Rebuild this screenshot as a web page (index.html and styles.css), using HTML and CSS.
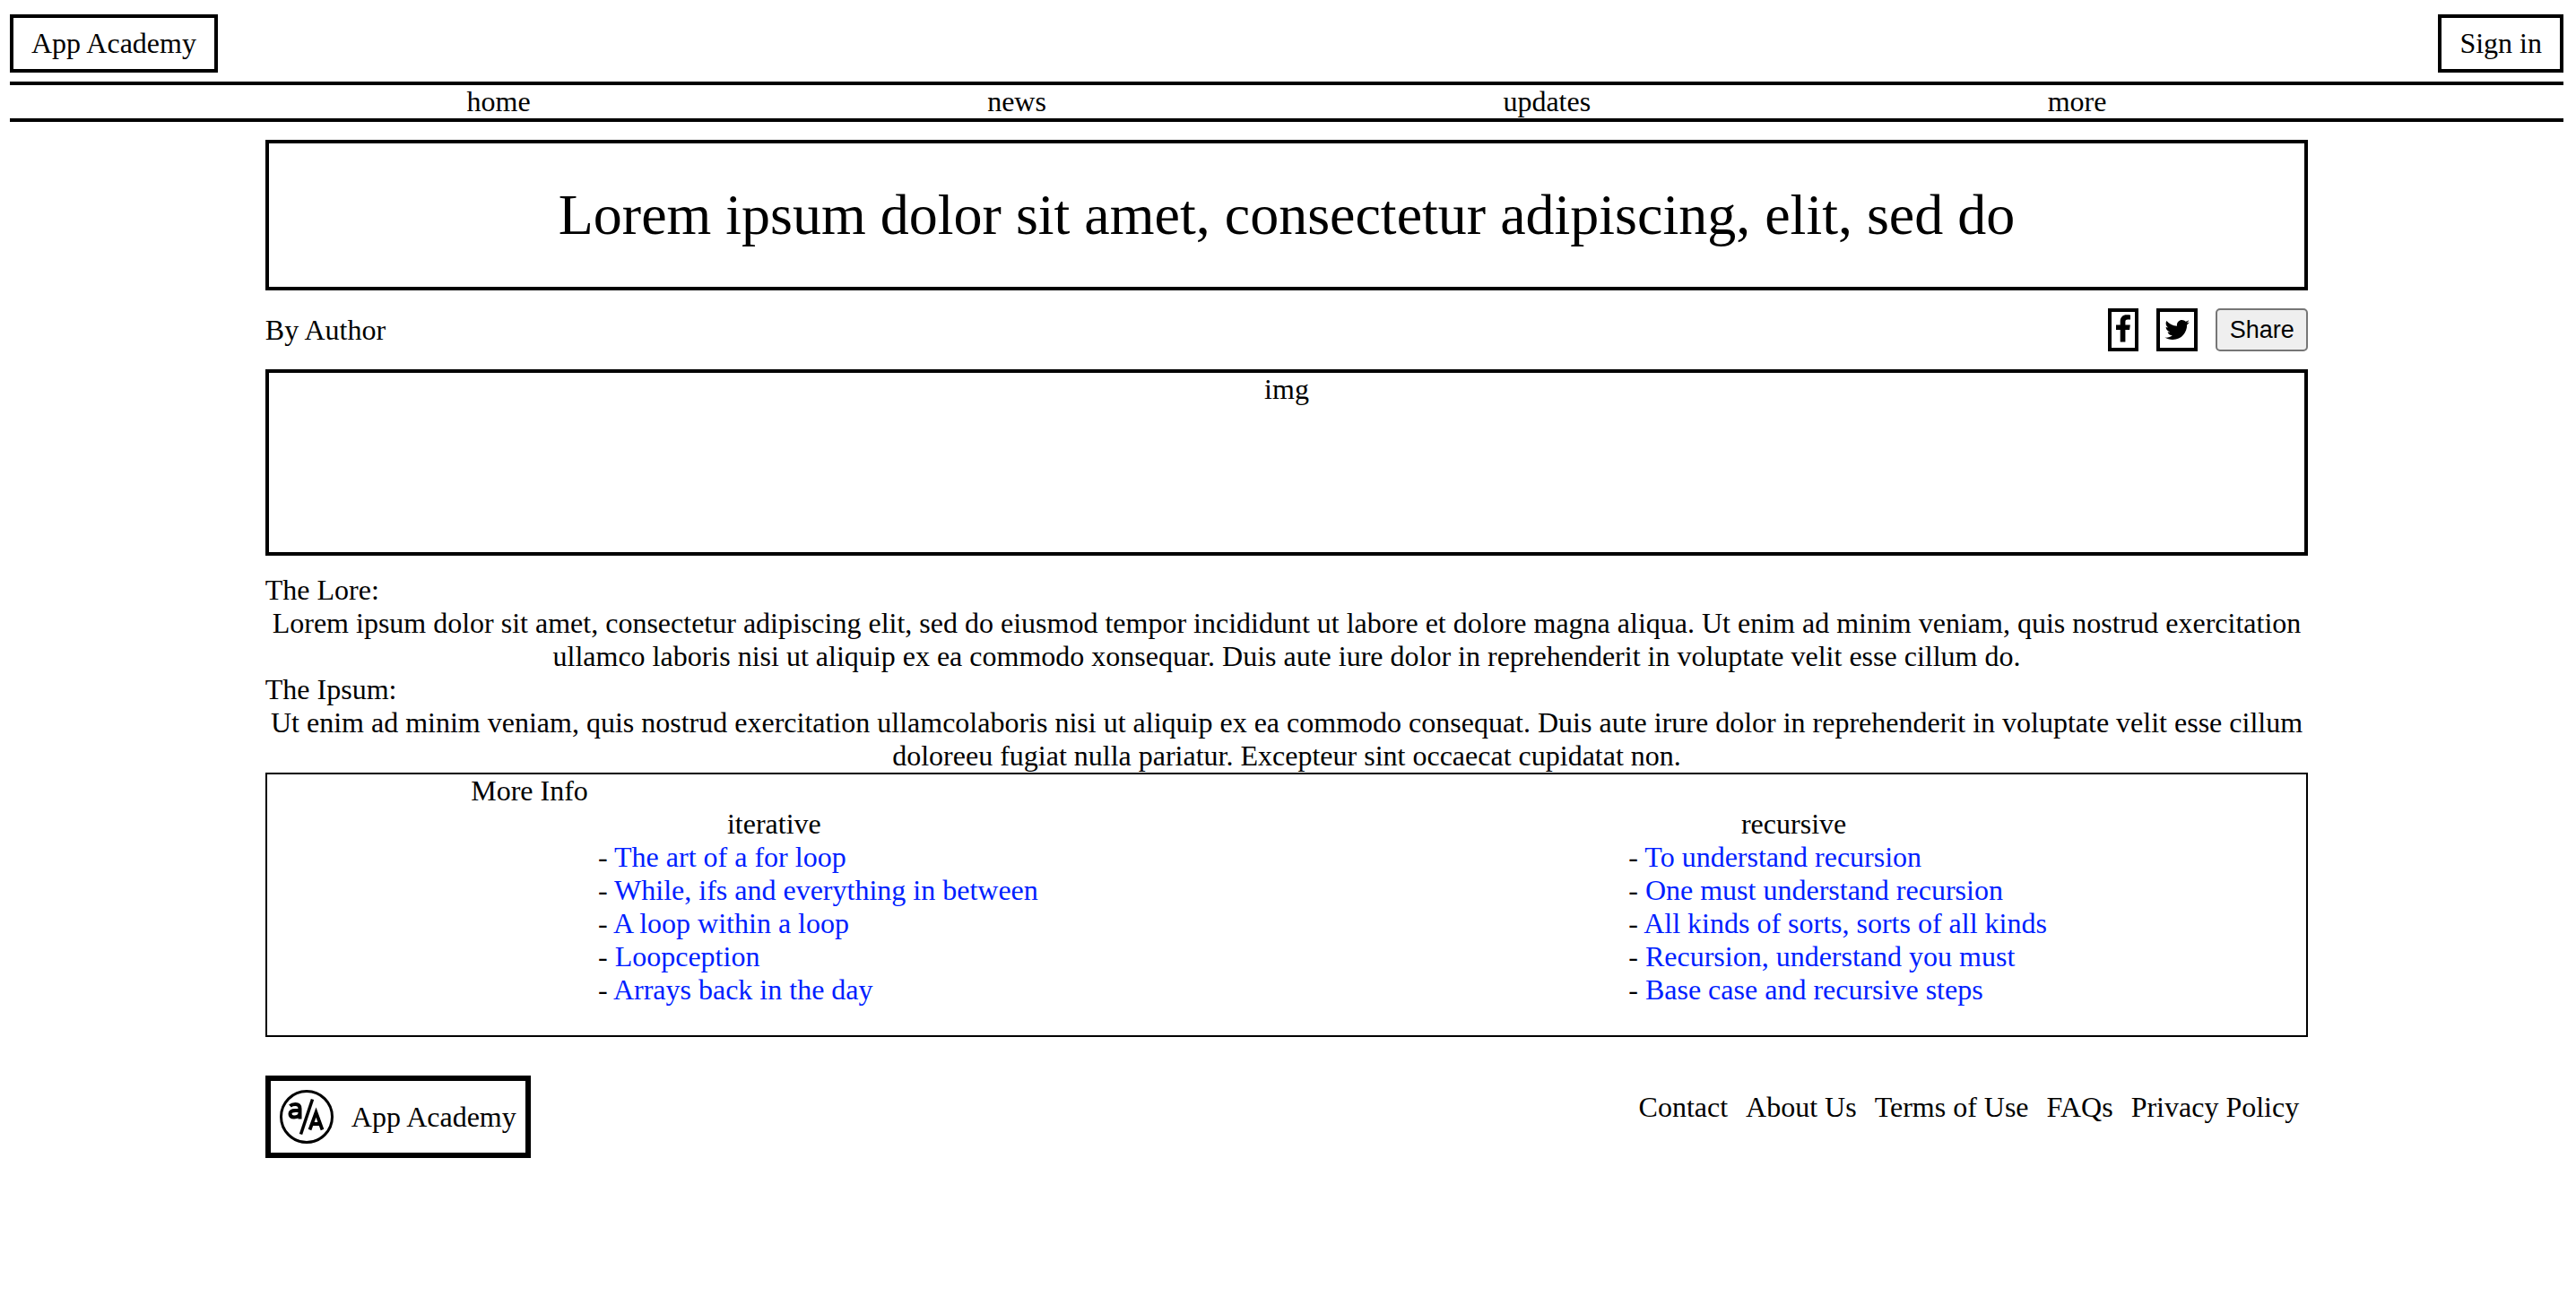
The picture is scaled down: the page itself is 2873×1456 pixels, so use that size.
FILE: index.html
```html
<!DOCTYPE html>
<html lang="en">
<head>
<meta charset="utf-8">
<meta name="viewport" content="width=device-width, initial-scale=1">
<title>App Academy</title>
<link rel="stylesheet" href="styles.css">
</head>
<body>
<header class="top-bar">
  <a class="box-link" href="#">App Academy</a>
  <a class="box-link" href="#">Sign in</a>
</header>
<nav class="main-nav">
  <a href="#">home</a>
  <a href="#">news</a>
  <a href="#">updates</a>
  <a href="#">more</a>
</nav>
<main class="content">
  <h1 class="title">Lorem ipsum dolor sit amet, consectetur adipiscing, elit, sed do</h1>
  <div class="byline">
    <span>By Author</span>
    <div class="social">
      <a class="social-link" href="#" aria-label="Facebook">
        <svg class="icon-facebook" viewBox="0 0 18 32"><path d="M17 1.500v5h-2.900c-2.300 0-2.700 1.100-2.700 2.700v3.300h5.400l-.7 5.500h-4.700v13.500H5.700V18H1v-5.500h4.700v-4C5.700 3.900 8.600 1.300 12.800 1.300c2 0 3.700.1 4.200.2z"/></svg>
      </a>
      <a class="social-link" href="#" aria-label="Twitter">
        <svg class="icon-twitter" viewBox="0 -2 30 32"><path d="M28.900 7.500c-.8 1.100-1.700 2.100-2.800 2.900v.7c0 7.400-5.700 16-16 16-3.200 0-6.200-.9-8.700-2.500.5.100.9.100 1.400.1 2.700 0 5.100-.9 7-2.400-2.500 0-4.600-1.700-5.300-3.900.4.100.7.100 1.100.1.500 0 1-.1 1.500-.2-2.600-.5-4.500-2.800-4.500-5.500v-.1c.7.400 1.600.7 2.500.7-1.500-1-2.500-2.700-2.500-4.700 0-1 .3-2 .8-2.800 2.800 3.400 6.900 5.600 11.600 5.900-.1-.4-.1-.9-.1-1.300 0-3.100 2.500-5.600 5.600-5.600 1.600 0 3.100.7 4.100 1.800 1.300-.2 2.500-.7 3.600-1.400-.4 1.300-1.300 2.400-2.500 3.100 1.100-.1 2.200-.4 3.200-.9z"/></svg>
      </a>
      <button class="share" type="button">Share</button>
    </div>
  </div>
  <div class="picture">img</div>
  <section>
    <h2 class="plain-heading">The Lore:</h2>
    <p class="paragraph">Lorem ipsum dolor sit amet, consectetur adipiscing elit, sed do eiusmod tempor incididunt ut labore et dolore magna aliqua. Ut enim ad minim veniam, quis nostrud exercitation ullamco laboris nisi ut aliquip ex ea commodo xonsequar. Duis aute iure dolor in reprehenderit in voluptate velit esse cillum do.</p>
    <h2 class="plain-heading">The Ipsum:</h2>
    <p class="paragraph">Ut enim ad minim veniam, quis nostrud exercitation ullamcolaboris nisi ut aliquip ex ea commodo consequat. Duis aute irure dolor in reprehenderit in voluptate velit esse cillum doloreeu fugiat nulla pariatur. Excepteur sint occaecat cupidatat non.</p>
  </section>
  <section class="more-info">
    <h2 class="plain-heading more-heading">More Info</h2>
    <div class="topics">
      <div class="topic">
        <h3 class="plain-heading topic-heading">iterative</h3>
        <ul class="topic-list">
          <li>- <a href="#">The art of a for loop</a></li>
          <li>- <a href="#">While, ifs and everything in between</a></li>
          <li>- <a href="#">A loop within a loop</a></li>
          <li>- <a href="#">Loopception</a></li>
          <li>- <a href="#">Arrays back in the day</a></li>
        </ul>
      </div>
      <div class="topic">
        <h3 class="plain-heading topic-heading">recursive</h3>
        <ul class="topic-list">
          <li>- <a href="#">To understand recursion</a></li>
          <li>- <a href="#">One must understand recursion</a></li>
          <li>- <a href="#">All kinds of sorts, sorts of all kinds</a></li>
          <li>- <a href="#">Recursion, understand you must</a></li>
          <li>- <a href="#">Base case and recursive steps</a></li>
        </ul>
      </div>
    </div>
  </section>
</main>
<footer class="footer">
  <a class="brand" href="#">
    <svg class="brand-logo" viewBox="0 0 60 60" aria-hidden="true">
      <circle cx="30" cy="30" r="28.500" stroke-width="3"/>
      <path d="M36.500 10.500 23.500 49.500" stroke-width="3.500"/>
      <path d="M11.500 18c1.500-1.500 3.500-2 6-2 3.500 0 5 1.500 5 5v11.500M22.500 23h-5c-4 0-6 1.300-6 3.700 0 2.300 1.700 3.800 4.500 3.800 3.500 0 6.500-2 6.500-5" stroke-width="4"/>
      <path d="M33.500 44.500 40.500 25 47.500 44.500M36 38h9" stroke-width="3.800"/>
    </svg>
    <span>App Academy</span>
  </a>
  <nav class="footer-links">
    <a href="#">Contact</a>
    <a href="#">About Us</a>
    <a href="#">Terms of Use</a>
    <a href="#">FAQs</a>
    <a href="#">Privacy Policy</a>
  </nav>
</footer>
</body>
</html>
```

FILE: styles.css
```css
* {
  box-sizing: border-box;
}

body {
  margin: 16px 14px 16px 11px;
  background: #fff;
  color: #000;
  font-family: "Liberation Serif", "Times New Roman", serif;
  font-size: 32px;
  line-height: 37px;
}

a {
  color: inherit;
  text-decoration: none;
}

.top-bar {
  display: flex;
  justify-content: space-between;
  margin-bottom: 10px;
}

.box-link {
  padding: 10px 20px;
  border: 4px solid #000;
}

.main-nav {
  display: flex;
  justify-content: space-evenly;
  margin-bottom: 20px;
  border-top: 4px solid #000;
  border-bottom: 4px solid #000;
}

.content,
.footer {
  width: 80%;
  margin: 0 auto;
}

.title {
  margin: 0 0 20px;
  padding: 43px 20px;
  border: 4px solid #000;
  font-size: 64px;
  font-weight: 400;
  line-height: 74px;
  text-align: center;
}

.byline {
  display: flex;
  justify-content: space-between;
  align-items: center;
  margin-bottom: 20px;
}

.social {
  display: flex;
  gap: 20px;
}

.social-link {
  display: flex;
  padding: 2px 4px;
  border: 4px solid #000;
}

.icon-facebook {
  width: 18px;
  height: 32px;
}

.icon-twitter {
  width: 30px;
  height: 32px;
}

.share {
  width: 103px;
  height: 48px;
  padding: 0;
  border: 2px solid #767676;
  border-radius: 5px;
  background: #efefef;
  color: #000;
  font-family: "Liberation Sans", Arial, sans-serif;
  font-size: 27px;
}

.picture {
  min-height: 208px;
  margin-bottom: 20px;
  border: 4px solid #000;
  text-align: center;
}

.plain-heading {
  margin: 0;
  font-size: 32px;
  font-weight: 400;
}

.paragraph {
  margin: 0;
  text-align: center;
}

.more-info {
  padding-bottom: 32px;
  border: 2px solid #000;
}

.more-heading {
  padding-left: 10%;
}

.topics {
  display: grid;
  grid-template-columns: 1fr 1fr;
}

.topic {
  display: flex;
  flex-direction: column;
  align-items: center;
}

.topic-heading {
  padding-right: 6px;
}

.topic-list {
  margin: 0;
  padding: 0 0 0 92px;
  list-style: none;
}

.topic-list a {
  color: #001eff;
}

.footer {
  display: flex;
  justify-content: space-between;
  align-items: flex-start;
  margin-top: 43px;
}

.brand {
  display: flex;
  align-items: center;
  gap: 20px;
  padding: 10px;
  border: 6px solid #000;
}

.brand-logo {
  width: 60px;
  height: 60px;
  fill: none;
  stroke: #000;
}

.footer-links {
  display: flex;
  gap: 20px;
  padding: 17px 10px 0;
}
```
